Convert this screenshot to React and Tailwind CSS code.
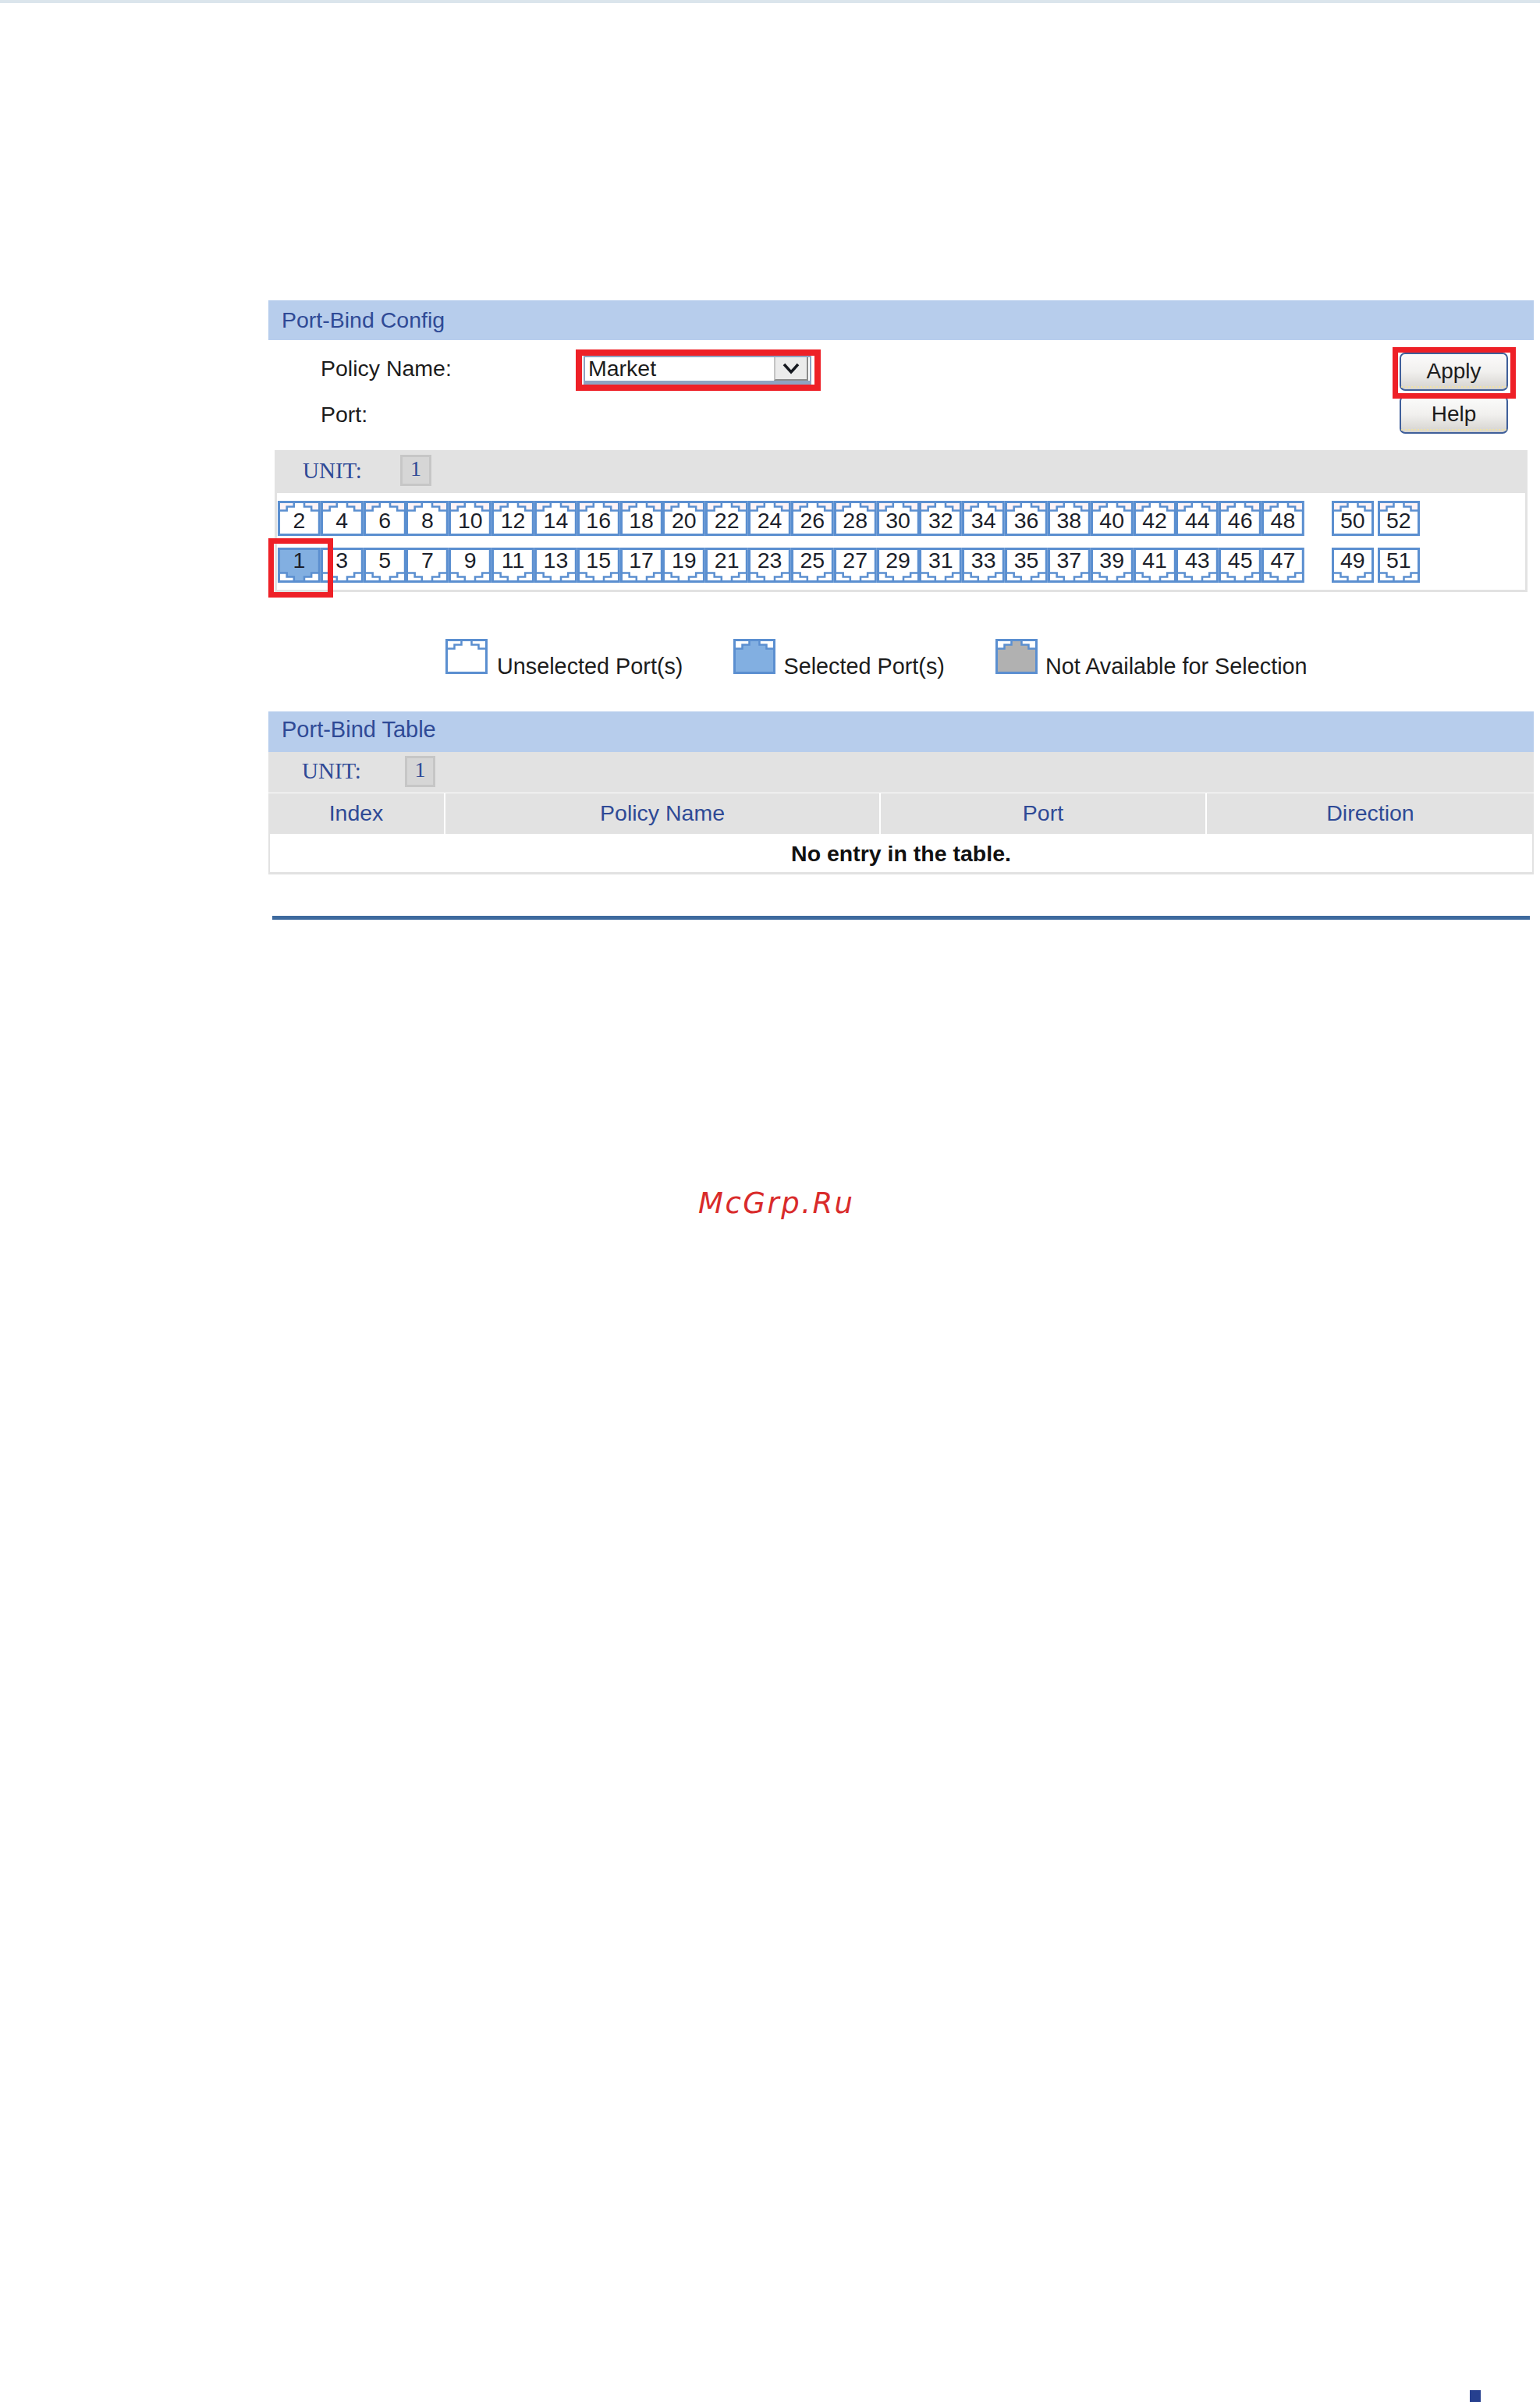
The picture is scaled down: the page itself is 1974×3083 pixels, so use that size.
import React from "react";

const evens = Array.from({ length: 24 }, (_, i) => (i + 1) * 2);
const odds = Array.from({ length: 24 }, (_, i) => i * 2 + 1);

function PortShape({ fill = "#ffffff", corner = "#ffffff", flip = false }) {
  return (
    <svg
      viewBox="0 0 54 45"
      preserveAspectRatio="none"
      className={`absolute inset-0 h-full w-full ${flip ? "-scale-y-100" : ""}`}
    >
      <rect x="1.5" y="1.5" width="51" height="42" fill={fill} stroke="#5b8fd0" strokeWidth="3" />
      <path d="M3 3H20V7H11V12H3Z" fill={corner} />
      <path d="M51 3H34V7H43V12H51Z" fill={corner} />
      <path d="M2 12.5H11.5V7.5H20.5V3" fill="none" stroke="#5b8fd0" strokeWidth="2.5" />
      <path d="M52 12.5H42.5V7.5H33.5V3" fill="none" stroke="#5b8fd0" strokeWidth="2.5" />
    </svg>
  );
}

function Port({ n, bottom, selected }) {
  return (
    <div className={`relative flex h-[45px] items-start justify-center ${bottom ? "" : "pt-[9px]"}`}>
      <PortShape
        flip={bottom}
        fill={selected ? "#82afe1" : "#ffffff"}
        corner={bottom ? "#ffffff" : "#fdf3f6"}
      />
      <span className="relative leading-[33px] text-[#1c1f2b]">{n}</span>
    </div>
  );
}

function PortRow({ nums, extra, bottom }) {
  return (
    <div className="flex">
      <div className="grid grid-cols-[repeat(24,54.83px)]">
        {nums.map((n) => (
          <Port key={n} n={n} bottom={bottom} selected={n === 1} />
        ))}
      </div>
      <div className="ml-[35px] grid grid-cols-[54px_54px] gap-x-[5px]">
        {extra.map((n) => (
          <Port key={n} n={n} bottom={bottom} />
        ))}
      </div>
    </div>
  );
}

function UnitBar({ labelWidth, boxWidth, layout }) {
  return (
    <div className={`flex items-center bg-[#e2e2e2] ${layout}`}>
      <span className={`font-['Liberation_Serif',serif] text-[29px] leading-[33px] text-[#2f4a96] ${labelWidth}`}>
        UNIT:
      </span>
      <span
        className={`flex h-[40px] justify-center border-[3px] border-[#c6c6c6] bg-[#d6d6d6] font-['Liberation_Serif',serif] text-[28px] leading-[30px] text-[#2f4a96] ${boxWidth}`}
      >
        1
      </span>
    </div>
  );
}

function ActionButton({ children }) {
  return (
    <button className="h-[49px] w-[139px] rounded-[7px] border-2 border-[#3f5f9a] bg-linear-to-b from-[#fbfbfb] via-[#f1f0ee] to-[#d5d3cf] p-0 text-[28px] leading-none text-[#1c1c1c]">
      <span className="flex h-[41px] items-center justify-center border-b-2 border-dotted border-[#efe2a8]">
        {children}
      </span>
    </button>
  );
}

function LegendItem({ fill, label, gap }) {
  return (
    <div className={`flex items-start ${gap}`}>
      <div className="relative h-[45px] w-[54px]">
        <PortShape fill={fill} />
      </div>
      <span className="mt-[19px] text-[28.8px] leading-[33px] text-[#1c1c1c]">{label}</span>
    </div>
  );
}

export default function App() {
  return (
    <div className="flex h-[3083px] w-[1974px] flex-col bg-white font-['Liberation_Sans',Arial,sans-serif] text-[28.5px]">
      <div className="h-[4px] bg-[#dbe5ec]" />

      <div className="ml-[344px] mt-[381px] w-[1622px]">
        <div className="flex h-[51px] items-center bg-[#b7cdec] pl-[17px] text-[#2f4a96]">Port-Bind Config</div>

        <div className="flex h-[141px] justify-between">
          <div className="pl-[67px] text-[#1c1c1c]">
            <div className="mt-[20px] flex h-[38px] items-start">
              <span className="w-[337px] leading-[33px]">Policy Name:</span>
              <div className="relative h-[38px] w-[292px]">
                <div className="flex h-full border-2 border-b-[6px] border-[#8fa3c2] bg-white">
                  <span className="flex-1 pl-[4px] leading-[29px]">Market</span>
                  <span className="mr-[2px] flex w-[44px] items-center justify-center border-b-2 border-l-2 border-r-2 border-b-[#8a8a8a] border-l-[#c4c4c4] border-r-[#8a8a8a] bg-[#ebebeb]">
                    <svg viewBox="0 0 22 15" className="h-[15px] w-[22px]">
                      <path d="M2 2L11 12L20 2" fill="none" stroke="#15181f" strokeWidth="3.5" />
                    </svg>
                  </span>
                </div>
                <div className="absolute -bottom-[7px] -left-[10px] -right-[12px] -top-[8px] border-[8px] border-[#ee2027]" />
              </div>
            </div>
            <div className="mt-[21px] leading-[33px]">Port:</div>
          </div>

          <div className="relative mr-[33px] mt-[16px] flex h-[104px] flex-col gap-[6px]">
            <ActionButton>Apply</ActionButton>
            <ActionButton>Help</ActionButton>
            <div className="absolute -left-[9px] -right-[10px] -top-[7px] h-[66px] border-[7px] border-[#ee2027]" />
          </div>
        </div>

        <div className="ml-[8px] w-[1606px] border-x-[3px] border-b-[3px] border-[#e2e2e2]">
          <UnitBar labelWidth="w-[125px]" boxWidth="w-[40px]" layout="h-[55px] pb-[3px] pl-[33px]" />
          <div className="relative flex flex-col gap-[15px] pb-[9px] pl-[1px] pt-[10px]">
            <PortRow nums={evens} extra={[50, 52]} />
            <PortRow nums={odds} extra={[49, 51]} bottom />
            <div className="absolute -left-[11px] top-[58px] h-[76px] w-[83px] border-[7px] border-[#ee2027]" />
          </div>
        </div>

        <div className="ml-[227px] mt-[60px] flex h-[93px] items-start gap-[65px]">
          <LegendItem fill="#ffffff" label="Unselected Port(s)" gap="gap-[12px]" />
          <LegendItem fill="#82afe1" label="Selected Port(s)" gap="gap-[10px]" />
          <LegendItem fill="#b1b1b1" label="Not Available for Selection" gap="gap-[10px]" />
        </div>

        <div className="flex h-[52px] items-center bg-[#b7cdec] pb-[4px] pl-[17px] text-[29px] text-[#2f4a96]">
          Port-Bind Table
        </div>
        <UnitBar labelWidth="w-[132px]" boxWidth="w-[39px]" layout="h-[52px] pb-[3px] pl-[43px]" />
        <div className="mt-[1px] grid h-[52px] grid-cols-[225px_558px_418px_421px] bg-[#e2e2e2] pb-0 text-[#2f4a96]">
          <div className="flex items-center justify-center pb-[2px]">Index</div>
          <div className="flex items-center justify-center border-l-2 border-white pb-[2px]">Policy Name</div>
          <div className="flex items-center justify-center border-l-2 border-white pb-[2px]">Port</div>
          <div className="flex items-center justify-center border-l-2 border-white pb-[2px]">Direction</div>
        </div>
        <div className="flex h-[52px] items-center justify-center border-x-2 border-b-[3px] border-[#e2e2e2] pt-[1px] font-bold text-[#111111]">
          No entry in the table.
        </div>

        <div className="ml-[5px] mt-[53px] h-[5px] w-[1612px] bg-[#3e6a9e]" />
      </div>

      <div className="ml-[895px] mt-[342px] font-['DejaVu_Sans',sans-serif] text-[37px] italic leading-[44px] tracking-[2.5px] text-[#d92b2b]">
        McGrp.Ru
      </div>

      <div className="mb-[4px] ml-[1884px] mt-auto h-[15px] w-[14px] bg-[#26408f]" />
    </div>
  );
}
